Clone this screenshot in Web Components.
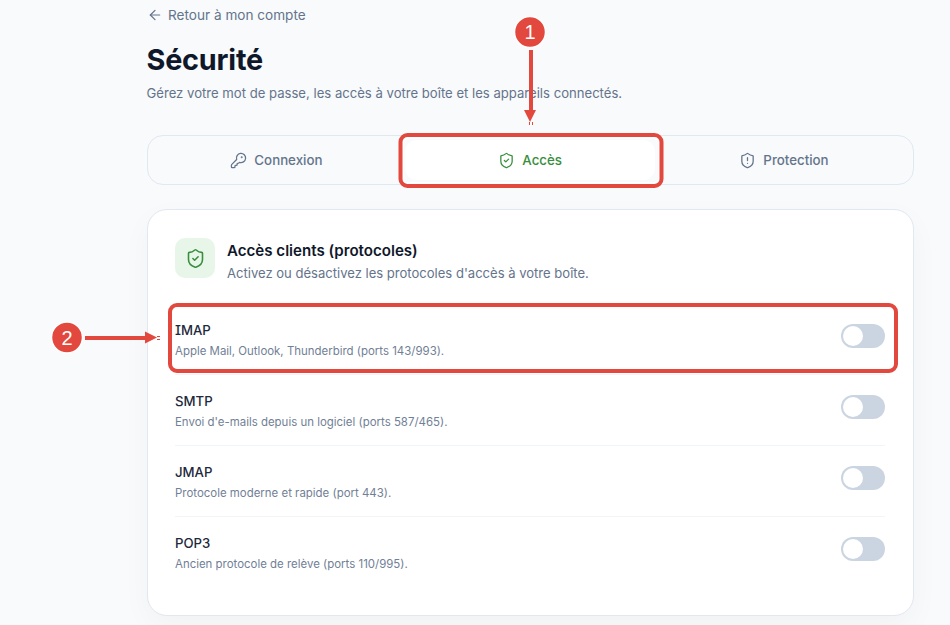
<!doctype html>
<html lang="fr">
<head>
<meta charset="utf-8">
<title>Sécurité</title>
<style>
html,body{margin:0;height:100%;overflow:hidden;background:#f8fafc}
body{font-family:Inter,"Noto Sans",sans-serif;font-feature-settings:"cv08";color:#0f172a;-webkit-font-smoothing:antialiased}
</style>
</head>
<body>
<sc-page>
  <sc-back>Retour à mon compte</sc-back>
  <sc-heading title="Sécurité">Gérez votre mot de passe, les accès à votre boîte et les appareils connectés.</sc-heading>
  <sc-tabs>
    <sc-tab icon="key">Connexion</sc-tab>
    <sc-tab icon="check" active>Accès</sc-tab>
    <sc-tab icon="alert">Protection</sc-tab>
  </sc-tabs>
  <sc-card heading="Accès clients (protocoles)" sub="Activez ou désactivez les protocoles d'accès à votre boîte.">
    <sc-row name="IMAP">Apple Mail, Outlook, Thunderbird (ports 143/993).</sc-row>
    <sc-row name="SMTP">Envoi d'e-mails depuis un logiciel (ports 587/465).</sc-row>
    <sc-row name="JMAP">Protocole moderne et rapide (port 443).</sc-row>
    <sc-row name="POP3" last>Ancien protocole de relève (ports 110/995).</sc-row>
  </sc-card>
</sc-page>
<sc-annotations></sc-annotations>
<script>
const ICONS={
  back:'<path d="m12 19-7-7 7-7"/><path d="M19 12H5"/>',
  key:'<path d="M2.586 17.414A2 2 0 0 0 2 18.828V21a1 1 0 0 0 1 1h3a1 1 0 0 0 1-1v-1a1 1 0 0 1 1-1h1a1 1 0 0 0 1-1v-1a1 1 0 0 1 1-1h.172a2 2 0 0 0 1.414-.586l.814-.814a6.5 6.5 0 1 0-4-4z"/><circle cx="16.5" cy="7.5" r=".5" fill="currentColor"/>',
  check:'<path d="M20 13c0 5-3.5 7.5-7.66 8.95a1 1 0 0 1-.67-.01C7.5 20.5 4 18 4 13V6a1 1 0 0 1 1-1c2 0 4.5-1.2 6.24-2.72a1.17 1.17 0 0 1 1.52 0C14.51 3.81 17 5 19 5a1 1 0 0 1 1 1z"/><path d="m9 12 2 2 4-4"/>',
  alert:'<path d="M20 13c0 5-3.5 7.5-7.66 8.95a1 1 0 0 1-.67-.01C7.5 20.5 4 18 4 13V6a1 1 0 0 1 1-1c2 0 4.5-1.2 6.24-2.72a1.17 1.17 0 0 1 1.52 0C14.51 3.81 17 5 19 5a1 1 0 0 1 1 1z"/><path d="M12 8v4"/><path d="M12 16h.01"/>'
};
const svg=(n,s,w=2)=>`<svg viewBox="0 0 24 24" width="${s}" height="${s}" fill="none" stroke="currentColor" stroke-width="${w}" stroke-linecap="round" stroke-linejoin="round" aria-hidden="true">${ICONS[n]}</svg>`;
class Base extends HTMLElement{
  render(html){this.attachShadow({mode:'open'}).innerHTML=html;}
}
customElements.define('sc-page',class extends Base{connectedCallback(){this.render(`<style>
:host{display:block;box-sizing:border-box;width:767.4px;margin-left:146.5px;padding-top:6px}
</style><slot></slot>`)}});
customElements.define('sc-back',class extends Base{connectedCallback(){this.render(`<style>
:host{display:flex;align-items:center;gap:5.5px;height:17px;font-size:13.6px;font-weight:400;color:#64748b}
svg{flex:none}
</style>${svg('back',16,1.8)}<slot></slot>`)}});
customElements.define('sc-heading',class extends Base{connectedCallback(){this.render(`<style>
:host{display:block;padding-top:18px;margin-bottom:32px}
h1{margin:0;font-size:28.8px;line-height:38px;font-weight:700;color:#0f172a;letter-spacing:-.2px}
p{margin:0;padding-top:5px;height:19px;font-size:13.12px;line-height:18px;color:#64748b}
</style><h1>${this.getAttribute('title')}</h1><p><slot></slot></p>`);this.removeAttribute('title')}});
customElements.define('sc-tabs',class extends Base{connectedCallback(){this.render(`<style>
:host{display:grid;grid-template-columns:repeat(3,1fr);gap:4px;box-sizing:border-box;height:50px;padding:4px;border:1px solid #e2e8f0;border-radius:16px;background:#f8fafc;margin-bottom:24px}
</style><slot></slot>`)}});
customElements.define('sc-tab',class extends Base{connectedCallback(){const a=this.hasAttribute('active');this.render(`<style>
:host{display:flex;align-items:center;justify-content:center;gap:7px;height:40px;border-radius:12px;font-size:13.3px;font-weight:500;color:${a?'#388e3c':'#64748b'};background:${a?'#fff':'transparent'}}
</style>${svg(this.getAttribute('icon'),17,1.8)}<span><slot></slot></span>`)}});
customElements.define('sc-card',class extends Base{connectedCallback(){this.render(`<style>
:host{display:block;box-sizing:border-box;height:406.5px;padding:28px 28px 28px 27.5px;background:#fff;border:1px solid #e2e8f0;border-radius:20px;box-shadow:0 10px 30px rgba(15,23,42,.035)}
header{display:flex;gap:12px;margin-bottom:22px}
.ic{flex:none;width:40px;height:40px;border-radius:10px;background:#e8f5e9;color:#388e3c;display:flex;align-items:center;justify-content:center}
h2{margin:0;font-size:15.1px;line-height:22px;font-weight:600;color:#0f172a;margin-top:2px}
p{margin:0;padding-top:2px;font-size:13.05px;line-height:18px;color:#64748b}
</style><header><div class="ic">${svg('check',21,1.8)}</div><div><h2>${this.getAttribute('heading')}</h2><p>${this.getAttribute('sub')}</p></div></header><div><slot></slot></div>`)}});
customElements.define('sc-row',class extends Base{connectedCallback(){const l=this.hasAttribute('last');this.render(`<style>
:host{display:flex;justify-content:space-between;align-items:flex-start;box-sizing:border-box;height:71px;padding:16px 0 0;${l?'':'border-bottom:1px solid #f1f5f9'}}
b{display:block;font-size:13.2px;line-height:20px;font-weight:500;color:#1e293b}
span{display:block;padding-top:2px;font-size:11.45px;line-height:18px;color:#718096}
sc-toggle{margin-top:4px}
</style><div><b>${this.getAttribute('name')}</b><span><slot></slot></span></div><sc-toggle></sc-toggle>`)}});
customElements.define('sc-toggle',class extends Base{connectedCallback(){this.render(`<style>
:host{display:block;flex:none;box-sizing:border-box;width:44px;height:24px;padding:2px;border-radius:12px;background:#cbd5e1}
i{display:block;width:20px;height:20px;border-radius:50%;background:#fff}
</style><i></i>`)}});
customElements.define('sc-annotations',class extends Base{connectedCallback(){this.render(`<style>
:host{position:absolute;inset:0;display:block;pointer-events:none}
svg{display:block}
text{font:20px "Liberation Sans",sans-serif;fill:#fff;text-anchor:middle}
</style><svg width="950" height="625" viewBox="0 0 950 625">
<rect x="403" y="138" width="256" height="45" rx="5" fill="none" stroke="#fff" stroke-width="2"/>
<rect x="400.5" y="135" width="261" height="51" rx="7" fill="none" stroke="#e2483d" stroke-width="4"/>
<rect x="170" y="305" width="726" height="66" rx="7" fill="none" stroke="#e2483d" stroke-width="4"/>
<circle cx="530" cy="32" r="15.5" fill="#e2483d" stroke="#fff" stroke-width="1.5"/>
<text x="530" y="39">1</text>
<path d="M529 50h4v60h-4z" fill="#e2483d"/><path d="M524 110h12l-6 12z" fill="#e2483d"/><path d="M529 122h1v3h-1zM532 122h1v3h-1z" fill="#e2483d"/>
<circle cx="67" cy="337.5" r="15.5" fill="#e2483d" stroke="#fff" stroke-width="1.5"/>
<text x="67" y="345">2</text>
<path d="M85 336h60v4H85z" fill="#e2483d"/><path d="M145 331.5v12l12-6z" fill="#e2483d"/><path d="M157 336h3v1h-3zM157 339h3v1h-3z" fill="#e2483d"/>
</svg>`)}});
</script>
</body>
</html>
